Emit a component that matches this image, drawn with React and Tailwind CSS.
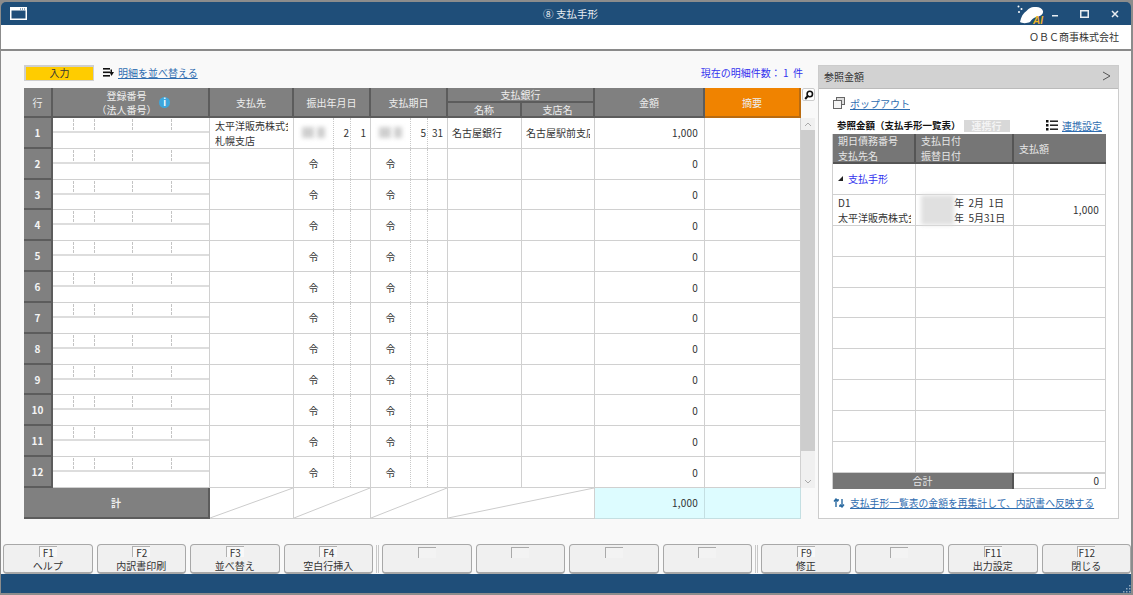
import React from "react";

const rows = [1, 2, 3, 4, 5, 6, 7, 8, 9, 10, 11, 12];

const fkeys = [
  { f: "F1", label: "ヘルプ" },
  { f: "F2", label: "内訳書印刷" },
  { f: "F3", label: "並べ替え" },
  { f: "F4", label: "空白行挿入", sep: true },
  {},
  {},
  {},
  { sep: true },
  { f: "F9", label: "修正" },
  {},
  { f: "F11", label: "出力設定" },
  { f: "F12", label: "閉じる" },
];

const Head = ({ className = "", bg = "bg-[#808080] border-[#5c5c5c]", children }) => (
  <div
    className={`flex items-center justify-center pt-[1px] text-[#eeeeee] border-r-2 border-b-2 text-center leading-[14px] ${bg} ${className}`}
  >
    {children}
  </div>
);

const Blur = ({ className = "" }) => <div className={`blur-[2px] ${className}`} />;

const Cell = ({ className = "", bg = "bg-white border-[#d0d0d0]", children }) => (
  <div className={`border-r border-b flex items-center ${bg} ${className}`}>{children}</div>
);

const DateCell = ({ blur, mid, last }) => (
  <Cell className="items-stretch">
    <div className="w-[40px] flex items-center justify-center gap-[3px] border-r border-dotted border-[#c8c8c8]">
      {blur ? (
        <>
          <Blur className="w-[12px] h-[11px] bg-[#cfcfcf]" />
          <Blur className="w-[8px] h-[11px] bg-[#cfcfcf]" />
        </>
      ) : (
        <span>令</span>
      )}
    </div>
    <div className="w-[17px] flex items-center justify-end pr-[1px] border-r border-dotted border-[#c8c8c8]">{mid}</div>
    <div className="flex-1 flex items-center justify-end pr-[4px]">{last}</div>
  </Cell>
);

const RegCell = () => (
  <div className="flex flex-col border-r border-b border-[#d0d0d0] bg-white">
    <div className="flex h-[15px] border-b-2 border-[#dddddd]">
      <div className="w-[21px] my-[1px] border-r border-dashed border-[#c4c4c4]" />
      <div className="w-[21px] my-[1px] border-r border-dashed border-[#c4c4c4]" />
      <div className="w-[38px] my-[1px] border-r border-dashed border-[#c4c4c4]" />
      <div className="w-[39px] my-[1px] border-r border-dashed border-[#c4c4c4]" />
    </div>
  </div>
);

const Slash = () => (
  <svg className="block w-full h-full" viewBox="0 0 100 30" preserveAspectRatio="none">
    <line x1="0" y1="30" x2="100" y2="0" stroke="#cccccc" strokeWidth="1" vectorEffect="non-scaling-stroke" />
  </svg>
);

const FKey = ({ f, label, sep }) => (
  <>
    <button className="flex-1 h-[30px] rounded-[4px] border border-[#a8a8a8] border-b-2 bg-[#f0f0f0] flex flex-col items-center text-[#333333]">
      {f ? (
        <>
          <span className="mt-[1px] min-w-[18px] h-[11px] leading-[11px] border-t border-l border-[#b0b0b0] bg-[#f8f8f8] text-[10px] text-center">
            {f}
          </span>
          <span className="mt-[3px] leading-[12px]">{label}</span>
        </>
      ) : (
        <span className="mt-[2px] w-[18px] h-[11px] border-t border-l border-[#aaaaaa] bg-[#f3f3f3]" />
      )}
    </button>
    {sep && <div className="w-[3px] -mx-[1px] h-[28px] border-x border-[#c8c8c8] self-center" />}
  </>
);

const MainTable = () => (
  <div className="grid grid-cols-[29px_157px_84px_77px_77px_74px_73px_110px_96px] grid-rows-[15px_15px_repeat(12,30.83px)_31px] w-[777px] text-[#333333]">
    <Head className="row-span-2">行</Head>
    <Head className="row-span-2 relative pr-[8px]">
      <div>
        登録番号
        <br />
        （法人番号）
      </div>
      <span className="absolute left-[106px] top-[9px] w-[11px] h-[11px] rounded-full bg-[#3ea6dc] text-white text-[9px] leading-[11px] font-bold">
        i
      </span>
    </Head>
    <Head className="row-span-2">支払先</Head>
    <Head className="row-span-2">振出年月日</Head>
    <Head className="row-span-2">支払期日</Head>
    <Head className="col-span-2">支払銀行</Head>
    <Head className="row-span-2">金額</Head>
    <Head className="row-span-2" bg="bg-[#f08300] border-[#b96b10]">摘要</Head>
    <Head>名称</Head>
    <Head>支店名</Head>

    {rows.map((n) => (
      <React.Fragment key={n}>
        <Head className="font-bold text-[#f4f4f4]">{n}</Head>
        <RegCell />
        <Cell className="pl-[5px] overflow-hidden">
          {n === 1 && (
            <div className="w-[73px] overflow-hidden whitespace-nowrap leading-[15px]">
              太平洋販売株式会社
              <br />
              札幌支店
            </div>
          )}
        </Cell>
        <DateCell blur={n === 1} mid={n === 1 ? "2" : ""} last={n === 1 ? "1" : ""} />
        <DateCell blur={n === 1} mid={n === 1 ? "5" : ""} last={n === 1 ? "31" : ""} />
        <Cell className="pl-[4px]">{n === 1 && "名古屋銀行"}</Cell>
        <Cell className="pl-[4px] overflow-hidden">
          {n === 1 && <div className="w-[64px] overflow-hidden whitespace-nowrap">名古屋駅前支店</div>}
        </Cell>
        <Cell className="justify-end pr-[6px] tracking-[0.2px]">{n === 1 ? "1,000" : "0"}</Cell>
        <Cell />
      </React.Fragment>
    ))}

    <Head className="col-span-2 font-bold">計</Head>
    <Cell><Slash /></Cell>
    <Cell><Slash /></Cell>
    <Cell><Slash /></Cell>
    <Cell className="col-span-2"><Slash /></Cell>
    <Cell className="justify-end pr-[6px] tracking-[0.2px]" bg="bg-[#ddfcff] border-[#c4dfe2]">1,000</Cell>
    <Cell bg="bg-[#ddfcff] border-[#c4dfe2]" />
  </div>
);

const Scroll = () => (
  <div className="w-[14px] flex flex-col">
    <div className="h-[30px] pl-[1px]">
      <div className="w-[13px] h-[13px] bg-white border border-[#cccccc] rounded-[2px] flex items-center justify-center">
        <svg width="10" height="10" viewBox="0 0 10 10">
          <circle cx="5.8" cy="4" r="2.7" fill="none" stroke="#111111" strokeWidth="1.6" />
          <line x1="3.8" y1="6" x2="1.2" y2="9" stroke="#111111" strokeWidth="2" />
        </svg>
      </div>
    </div>
    <div className="h-[370px] bg-[#f0f0f0] flex flex-col items-center">
      <div className="h-[12px] flex items-center">
        <svg width="8" height="5" viewBox="0 0 8 5"><path d="M1 4 L4 1 L7 4" fill="none" stroke="#aaaaaa" /></svg>
      </div>
      <div className="w-full h-[321px] bg-[#cdcdcd]" />
      <div className="flex-1 flex items-end pb-[4px]">
        <svg width="8" height="5" viewBox="0 0 8 5"><path d="M1 1 L4 4 L7 1" fill="none" stroke="#aaaaaa" /></svg>
      </div>
    </div>
  </div>
);

const RefCell = ({ className = "", children }) => (
  <div className={`border-r border-b border-[#d0d0d0] flex ${className}`}>{children}</div>
);

const RefPanel = () => (
  <div className="w-[301px] h-[454px] flex flex-col bg-white border border-[#cccccc]">
    <div className="h-[23px] shrink-0 bg-[#d2d2d2] border-b border-[#bbbbbb] flex items-center justify-between pl-[5px] pr-[7px] pb-[2px] text-[#333333]">
      <span>参照金額</span>
      <svg width="9" height="10" viewBox="0 0 9 10"><path d="M1 1 L8 5 L1 9" fill="none" stroke="#555555" /></svg>
    </div>
    <div className="flex-1 pl-[13px] pr-[12px] flex flex-col">
      <div className="h-[28px] flex items-center gap-[5px] pl-[1px]">
        <svg width="12" height="12" viewBox="0 0 12 12" fill="none" stroke="#666666">
          <rect x="3.5" y="0.5" width="8" height="7" fill="#dddddd" />
          <rect x="0.5" y="3.5" width="8" height="8" fill="#f4f4f4" />
        </svg>
        <span className="text-[#2f6db0] underline">ポップアウト</span>
      </div>
      <div className="h-[17px] flex items-center pl-[5px] text-[#111111]">
        <span className="font-bold text-[9.5px]">参照金額（支払手形一覧表）</span>
        <span className="ml-[3px] w-[46px] h-[12px] leading-[12px] bg-[#d8d8d8] text-[#f4f4f4] text-center font-bold">連携行</span>
        <svg className="ml-auto mr-[4px]" width="12" height="11" viewBox="0 0 12 11" fill="#111111">
          <rect x="0" y="0" width="2.5" height="2.5" />
          <rect x="4" y="0.5" width="8" height="1.4" />
          <rect x="0" y="4" width="2.5" height="2.5" />
          <rect x="4" y="4.5" width="8" height="1.4" />
          <rect x="0" y="8" width="2.5" height="2.5" />
          <rect x="4" y="8.5" width="8" height="1.4" />
        </svg>
        <span className="text-[#2f6db0] underline mr-[4px]">連携設定</span>
      </div>
      <div className="grid grid-cols-[83px_98px_92px] grid-rows-[30px_repeat(10,30.9px)_16px] w-[274px] border-l border-[#d0d0d0] text-[#333333]">
        <div className="bg-[#767676] text-[#e6e6e6] border-r-2 border-b-2 border-[#555555] pl-[5px] flex flex-col justify-center leading-[15px]">
          <span>期日債務番号</span>
          <span>支払先名</span>
        </div>
        <div className="bg-[#767676] text-[#e6e6e6] border-r-2 border-b-2 border-[#555555] pl-[5px] flex flex-col justify-center leading-[15px]">
          <span>支払日付</span>
          <span>振替日付</span>
        </div>
        <div className="bg-[#767676] text-[#e6e6e6] border-b-2 border-[#555555] pl-[5px] flex items-center">支払額</div>

        <RefCell className="items-center pl-[5px] text-[#3333ee]">
          <svg className="mr-[5px]" width="5" height="5" viewBox="0 0 5 5"><path d="M5 0 V5 H0 Z" fill="#222222" /></svg>
          支払手形
        </RefCell>
        <RefCell />
        <RefCell />

        <RefCell className="flex-col justify-center pl-[5px] leading-[15px]">
          <span>D1</span>
          <span className="w-[73px] overflow-hidden whitespace-nowrap">太平洋販売株式会社</span>
        </RefCell>
        <RefCell className="items-center pl-[5px]">
          <Blur className="w-[33px] h-[30px] bg-[#e0e0e0]" />
          <div className="leading-[15px] whitespace-pre">
            {"年  2月  1日"}
            <br />
            {"年  5月31日"}
          </div>
        </RefCell>
        <RefCell className="items-center justify-end pr-[6px] tracking-[0.2px]">1,000</RefCell>

        {[1, 2, 3, 4, 5, 6, 7, 8].map((n) => (
          <React.Fragment key={n}>
            <RefCell />
            <RefCell />
            <RefCell />
          </React.Fragment>
        ))}

        <div className="col-span-2 bg-[#767676] text-[#e6e6e6] border-r-2 border-[#555555] flex items-center justify-center">合計</div>
        <RefCell className="items-center justify-end pr-[6px] border-y">0</RefCell>
      </div>
      <div className="flex-1 flex items-center gap-[5px] pl-[1px] pb-[1px]">
        <svg width="12" height="10" viewBox="0 0 12 10" fill="none" stroke="#2a6aa0" strokeWidth="1.4">
          <path d="M3 9 V2 H6" />
          <path d="M1 3.5 L3 1 L5 3.5" />
          <path d="M9 1 V8 H6" />
          <path d="M7 6.5 L9 9 L11 6.5" />
        </svg>
        <span className="text-[#2f6db0] underline text-[9.8px]">支払手形一覧表の金額を再集計して、内訳書へ反映する</span>
      </div>
    </div>
  </div>
);

export default function App() {
  return (
    <div className="w-[1133px] h-[595px] overflow-hidden bg-[#8c8c8c] pl-[1px] pr-[2px] pt-[2px] pb-[2px] flex flex-col font-['Noto_Sans_CJK_JP','Noto_Sans',sans-serif] text-[10px]">
      {/* title bar */}
      <div className="h-[23px] shrink-0 bg-[#1f4e79] rounded-t-[5px] flex items-center text-[#e8edf2]">
        <div className="flex-1 pl-[9px]">
          <svg width="17" height="13" viewBox="0 0 17 13" fill="none">
            <rect x="0.75" y="0.75" width="15.5" height="11.5" stroke="#ffffff" strokeWidth="1.5" />
            <rect x="1" y="1" width="15" height="2.5" fill="#ffffff" />
            <rect x="10" y="1.5" width="1" height="1" fill="#1f4e79" />
            <rect x="12" y="1.5" width="1" height="1" fill="#1f4e79" />
            <rect x="14" y="1.5" width="1" height="1" fill="#1f4e79" />
          </svg>
        </div>
        <div className="text-[10.5px]">⑧ 支払手形</div>
        <div className="flex-1 flex items-center justify-end">
          <div className="relative w-[28px] h-[20px] mr-[8px]">
            <svg width="28" height="20" viewBox="0 0 28 20" fill="#ffffff">
              <path d="M4 18 C5 13 7 9 11 6.5 C13 4 16 2.5 19 3 C22 2.5 26 3.5 27 7 C27.5 10 25 12 21 13 C18 13.5 16 15 14 18 C11 19.5 6 19.5 4 18 Z" />
              <circle cx="2.5" cy="2.5" r="1" />
              <circle cx="5.5" cy="5" r="1" />
              <circle cx="3" cy="8" r="1" />
            </svg>
            <span className="absolute left-[17px] top-[12px] text-[10px] leading-[9px] font-bold italic text-[#f0b429] font-['Liberation_Sans',sans-serif]">
              AI
            </span>
          </div>
          <svg className="mr-[21px]" width="7" height="7" viewBox="0 0 7 7"><rect x="0" y="5" width="6" height="1.5" fill="#e8edf2" /></svg>
          <svg className="mr-[22px]" width="9" height="8" viewBox="0 0 9 8"><rect x="0.75" y="0.75" width="7.5" height="6.5" fill="none" stroke="#e8edf2" strokeWidth="1.5" /></svg>
          <svg className="mr-[12px]" width="8" height="8" viewBox="0 0 8 8"><path d="M1 1 L7 7 M7 1 L1 7" stroke="#e8edf2" strokeWidth="1.5" /></svg>
        </div>
      </div>

      {/* company band */}
      <div className="h-[26px] shrink-0 bg-white border-b-[2px] border-[#8a8a8a] flex items-center justify-end pr-[12px] pb-[2px] text-[#333333]">
        ＯＢＣ商事株式会社
      </div>

      {/* body */}
      <div className="h-[493px] shrink-0 bg-[#f9f9f9] pl-[23px] pt-[14px] flex">
        <div className="w-[791px] mr-[3px]">
          <div className="h-[23px] flex items-start pr-[12px]">
            <div className="w-[70px] h-[16px] leading-[11px] bg-[#ffcc00] border border-[#cfcfcf] border-t-2 border-l-2 text-center text-[#333333]">入力</div>
            <svg className="ml-[9px] mr-[4px] mt-[3px]" width="11" height="9" viewBox="0 0 11 9" fill="#111111">
              <rect x="0" y="0" width="7" height="1.6" />
              <rect x="0" y="3.5" width="7" height="1.6" />
              <rect x="0" y="7" width="7" height="1.6" />
              <path d="M7.5 1.5 H9 V4 H11 L8.5 8 L6.5 4 H7.5 Z" />
            </svg>
            <span className="text-[#2f6db0] underline">明細を並べ替える</span>
            <span className="ml-auto text-[#3333ee] whitespace-pre">現在の明細件数： 1  件</span>
          </div>
          <div className="flex">
            <MainTable />
            <Scroll />
          </div>
        </div>
        <RefPanel />
      </div>

      {/* function keys */}
      <div className="h-[30px] shrink-0 bg-[#f9f9f9] flex gap-[4px] pl-[2px] items-start">
        {fkeys.map((k, i) => (
          <FKey key={i} f={k.f} label={k.label} sep={k.sep} />
        ))}
      </div>

      {/* status bar */}
      <div className="flex-1 bg-[#1f4e79] flex justify-end items-end">
        <svg width="8" height="8" viewBox="0 0 8 8" fill="#8fa6bb">
          <rect x="6" y="0" width="1.5" height="1.5" />
          <rect x="3" y="3" width="1.5" height="1.5" />
          <rect x="6" y="3" width="1.5" height="1.5" />
          <rect x="0" y="6" width="1.5" height="1.5" />
          <rect x="3" y="6" width="1.5" height="1.5" />
          <rect x="6" y="6" width="1.5" height="1.5" />
        </svg>
      </div>
    </div>
  );
}
